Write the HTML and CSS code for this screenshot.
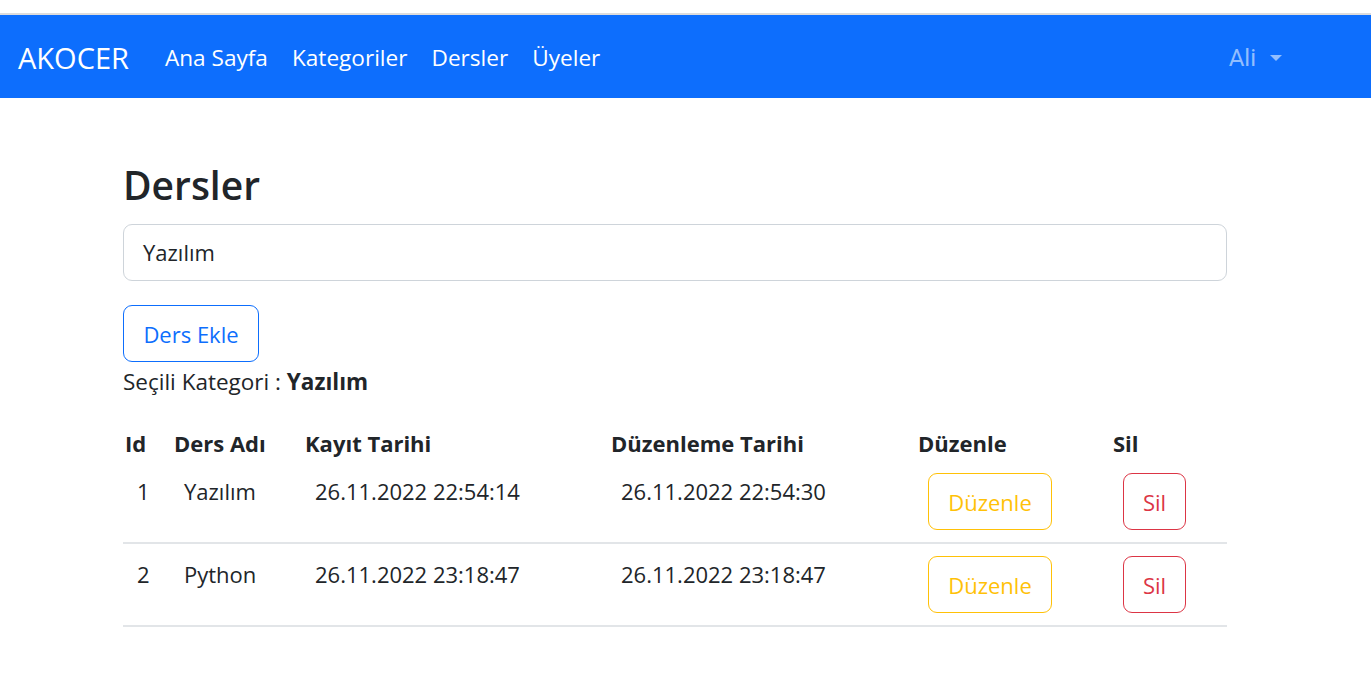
FILE: index.html
```html
<!DOCTYPE html>
<html lang="tr">
<head>
<meta charset="utf-8">
<title>Dersler</title>
<link rel="stylesheet" href="styles.css">
</head>
<body>
<div class="topline"></div>
<nav class="navbar">
  <a class="brand" href="#">AKOCER</a>
  <ul class="nav">
    <li><a href="#">Ana Sayfa</a></li>
    <li><a href="#">Kategoriler</a></li>
    <li><a href="#">Dersler</a></li>
    <li><a href="#">Üyeler</a></li>
  </ul>
  <div class="user">Ali <span class="caret"></span></div>
</nav>
<main class="main">
  <h2 class="title">Dersler</h2>
  <div class="select">Yazılım</div>
  <button class="btn btn-primary">Ders Ekle</button>
  <p class="selected">Seçili Kategori : <b>Yazılım</b></p>
  <table class="table">
    <colgroup>
      <col class="c1"><col class="c2"><col class="c3"><col class="c4"><col class="c5"><col class="c6">
    </colgroup>
    <thead>
      <tr><th>Id</th><th>Ders Adı</th><th>Kayıt Tarihi</th><th>Düzenleme Tarihi</th><th>Düzenle</th><th>Sil</th></tr>
    </thead>
    <tbody>
      <tr>
        <td class="num">1</td><td>Yazılım</td><td>26.11.2022 22:54:14</td><td>26.11.2022 22:54:30</td>
        <td><button class="btn btn-warning">Düzenle</button></td>
        <td><button class="btn btn-danger">Sil</button></td>
      </tr>
      <tr>
        <td class="num">2</td><td>Python</td><td>26.11.2022 23:18:47</td><td>26.11.2022 23:18:47</td>
        <td><button class="btn btn-warning">Düzenle</button></td>
        <td><button class="btn btn-danger">Sil</button></td>
      </tr>
    </tbody>
  </table>
</main>
</body>
</html>
```
FILE: styles.css
```css
* { box-sizing: border-box; }
html, body { margin: 0; padding: 0; }
body {
  font-family: "Open Sans", "Noto Sans", sans-serif;
  font-size: 22px;
  line-height: 36px;
  color: #212529;
  background: #fff;
}
.topline {
  height: 15px;
  border-bottom: 2px solid #dcdcdc;
}
.navbar {
  height: 83px;
  background: #0d6efd;
  display: flex;
  align-items: center;
  padding: 2px 0 0 18px;
}
.brand {
  color: #fff;
  text-decoration: none;
  font-size: 29px;
  margin-right: 24px;
}
.nav {
  list-style: none;
  margin: 0;
  padding: 0;
  display: flex;
  font-size: 22.6px;
}
.nav a {
  display: block;
  color: #fff;
  text-decoration: none;
  padding: 0 12px;
}
.user {
  margin-left: auto;
  margin-right: 89px;
  color: #92befe;
  font-family: "Roboto", "Liberation Sans", sans-serif;
  font-size: 24px;
  display: flex;
  align-items: center;
}
.caret {
  display: inline-block;
  margin-left: 14px;
  width: 0;
  height: 0;
  border-left: 6px solid transparent;
  border-right: 6px solid transparent;
  border-top: 6px solid #92befe;
}
.main {
  padding: 0 0 0 123px;
  width: 1227px;
}
.title {
  font-size: 39px;
  font-weight: 600;
  line-height: 48px;
  margin: 63px 0 15px 0;
}
.select {
  height: 57px;
  border: 1px solid #ced4da;
  border-radius: 9px;
  padding: 0 19px;
  line-height: 55px;
}
.btn {
  font-family: inherit;
  font-size: 22px;
  line-height: 36px;
  height: 57px;
  padding: 0 18px;
  border-radius: 9px;
  background: #fff;
  border: 1px solid;
  cursor: pointer;
}
.btn-primary {
  margin-top: 24px;
  width: 136px;
  color: #0d6efd;
  border-color: #0d6efd;
}
.btn-warning { color: #ffc107; border-color: #ffc107; width: 124px; }
.btn-danger { color: #dc3545; border-color: #dc3545; width: 63px; }
.selected {
  margin: 2px 0 25px 0;
  font-size: 22.5px;
}
.table {
  width: 1104px;
  border-collapse: collapse;
  table-layout: fixed;
}
.c1 { width: 49px; }
.c2 { width: 131px; }
.c3 { width: 306px; }
.c4 { width: 307px; }
.c5 { width: 195px; }
.c6 { width: 116px; }
.table th {
  text-align: left;
  font-weight: 700;
  padding: 0 0 0 2px;
  height: 36px;
}
.table td {
  padding: 12px 12px 12px 12px;
  vertical-align: top;
  border-bottom: 2px solid #e2e5e8;
  white-space: nowrap;
}
.table td.num { padding-left: 14px; }
```
